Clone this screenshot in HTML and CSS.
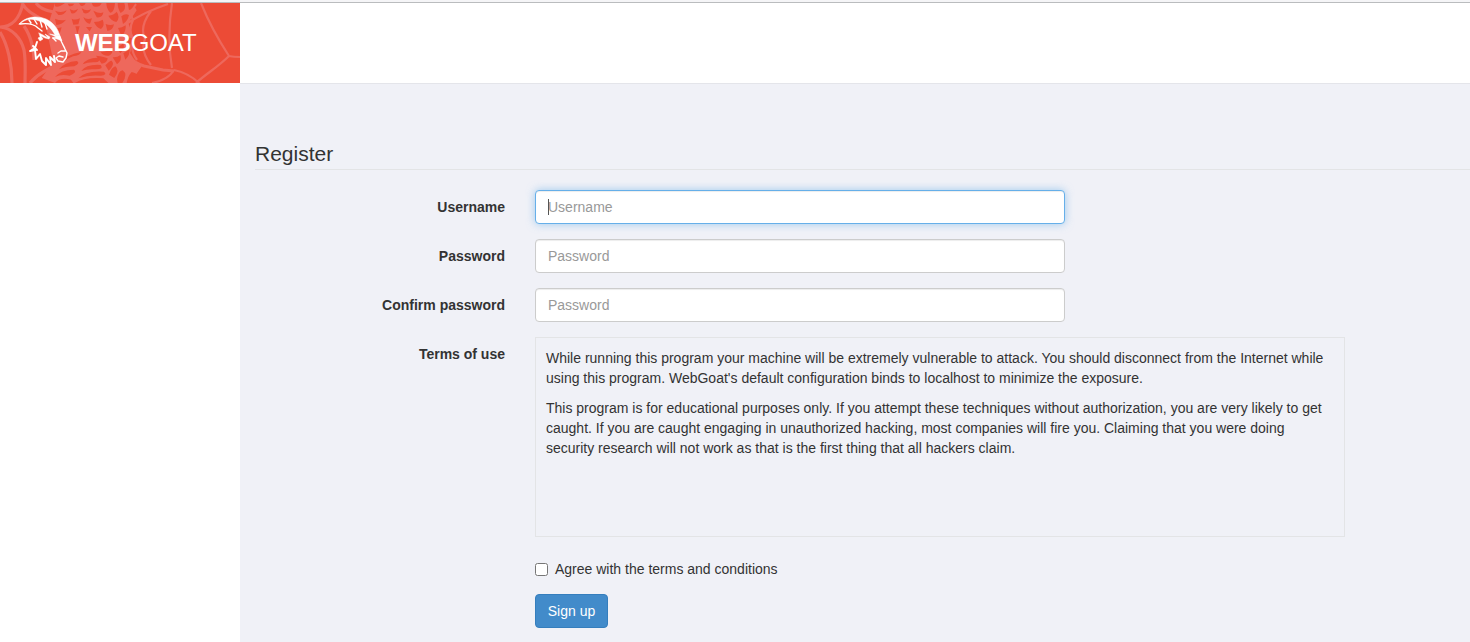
FILE: index.html
```html
<!DOCTYPE html>
<html lang="en">
<head>
<meta charset="utf-8">
<title>WebGoat</title>
<link rel="stylesheet" href="styles.css">
</head>
<body>
<div class="topline"></div>
<header class="header">
  <a class="brand">
    <svg class="brand-art" viewBox="0 3 240 80" aria-hidden="true">
      <g class="web">
        <path d="M0 27C12 27 20 18 23 3M0 27C12 28 21 38 24 50C26 62 25 73 25 83M0 32C8 45 12 65 12 83M22 3C28 14 38 16 50 24M24 26C31 36 34 50 34 60M30 83C40 71 55 66 72 58M36 3C40 9 48 11 54 12"/>
        <path d="M128 56Q134 63 144 66L163 70L174 71M140 66L128 83"/>
        <path class="thin" d="M172 3C169 23 168 45 172 68M201 3C209 23 216 36 229 56Q233 57 240 57M229 56C218 67 207 73 196 83M174 70C184 72 193 77 200 84M152 83Q168 80 174 70"/>
        <path class="thin" d="M168 4C156 8 140 15 126 24M151 11Q139 27 145 39Q140 51 151 65M136 4Q129 13 133 20Q128 30 133 40Q130 50 137 60"/>
      </g>
      <g transform="translate(55 3) scale(.33333)">
        <path class="web-fill" d="M0 0H233L245 22L220 60L238 110L225 150L245 180L258 188L245 205L230 240H0L-40 225L-5 175L-25 80Z"/>
        <g class="cells">
          <path d="M0 0H30Q12 14 0 10ZM38 2H58Q52 12 42 9ZM72 0H92Q88 12 77 8ZM110 0H140Q132 17 114 9ZM154 0H180Q178 28 166 29Q154 18 154 0ZM188 0H208Q216 20 197 30Q188 18 188 0ZM218 0H240Q232 20 222 21Z"/>
          <path d="M0 23Q20 32 35 22Q28 38 10 36ZM44 18Q58 27 69 17Q63 33 49 31ZM80 16Q96 26 108 18Q102 35 86 30ZM115 23Q134 33 145 28Q144 45 125 43ZM160 38Q177 36 185 26Q197 42 184 57Q169 54 160 38ZM199 40Q211 30 222 36Q218 55 204 63Z"/>
          <path d="M0 47Q18 55 33 50Q22 64 4 66ZM50 47Q60 53 75 46L70 64L55 65ZM85 42Q94 51 111 46L105 62Q92 62 85 42ZM117 57Q133 57 143 50Q151 67 138 78Q123 73 117 57ZM152 63Q166 69 177 64Q174 82 157 84ZM189 75Q201 75 212 67Q214 85 200 100ZM61 70L74 70L67 94ZM93 72L111 72L104 85ZM0 77L20 73L11 101Z"/>
          <path d="M137 148Q158 145 169 139Q177 151 162 158Q145 160 137 148ZM183 134Q195 131 205 121Q211 136 196 151ZM211 108Q221 102 230 105Q230 123 218 135ZM123 158Q151 161 158 166Q157 181 140 182ZM173 163Q188 164 196 156Q203 170 186 184ZM205 151L224 139Q225 158 211 170Z"/>
          <path d="M22 178Q36 153 79 147Q74 158 54 160Q39 166 22 178ZM83 184Q96 163 130 164Q139 176 120 178Q98 177 83 184ZM12 199Q30 176 65 174Q78 180 58 190Q31 190 12 199ZM79 204Q94 183 137 186Q148 199 122 199Q96 197 79 204ZM70 226Q91 202 147 206Q159 215 137 218Q101 215 70 226ZM0 222Q18 200 57 200Q68 207 44 218Q18 212 0 222ZM60 240Q88 222 145 226L160 240ZM0 240Q15 222 48 230L55 240Z"/>
          <path d="M151 187Q163 173 170 173Q181 184 161 203ZM162 215Q170 193 181 190Q196 202 178 225ZM186 229Q190 204 203 202Q220 214 202 240H188ZM215 240Q219 218 230 207Q246 210 248 220L233 240Z"/>
        </g>
      </g>
      <g class="goat">
        <path class="solid" d="M19 24C25 17 36 15 46 19C54 23 58 29 60 36L55 35C52 29 46 22 36 20C29 18 24 20 20 24Z"/>
        <path d="M20 24C27 23 34 24 38 28L42 31M29 20L31 23M34 19L37 24M40 20L42 27M45 23L47 29"/>
        <path class="solid" d="M39 33L43 35L48 38L45 34L50 37L49 39L45 38L41 36L43 39L40 41L38 38L40 37ZM50 34L60 36L62 41L57 39L52 38L56 37Z"/>
        <path d="M53 38L56 41M60 37C61 43 64 46 65 49L67 53L66 58L63 62L58 61L56 58L59 56L63 57M58 53L61 51L65 51"/>
        <path class="wool" d="M37 42L35 48L30 51L35 50L36 59L40 54L42 61L46 65L46 58L51 65L50 57L55 62L54 56M33 46L37 50"/>
      </g>
    </svg>
    <span class="brand-text"><b>WEB</b>GOAT</span>
  </a>
</header>
<div class="layout">
  <aside class="sidebar"></aside>
  <main class="content">
    <h1 class="legend">Register</h1>
    <form class="form">
      <div class="row">
        <label class="label" for="username">Username</label>
        <div class="field"><input class="input input-active" id="username" type="text" placeholder="Username"><i class="caret"></i></div>
      </div>
      <div class="row">
        <label class="label" for="password">Password</label>
        <div class="field"><input class="input" id="password" type="password" placeholder="Password"></div>
      </div>
      <div class="row">
        <label class="label" for="confirm">Confirm password</label>
        <div class="field"><input class="input" id="confirm" type="password" placeholder="Password"></div>
      </div>
      <div class="row">
        <span class="label">Terms of use</span>
        <div class="terms">
          <p>While running this program your machine will be extremely vulnerable to attack. You should disconnect from the Internet while using this program. WebGoat's default configuration binds to localhost to minimize the exposure.</p>
          <p>This program is for educational purposes only. If you attempt these techniques without authorization, you are very likely to get caught. If you are caught engaging in unauthorized hacking, most companies will fire you. Claiming that you were doing security research will not work as that is the first thing that all hackers claim.</p>
        </div>
      </div>
      <label class="agree"><input type="checkbox" class="check"><span>Agree with the terms and conditions</span></label>
      <button class="button" type="button">Sign up</button>
    </form>
  </main>
</div>
</body>
</html>
```
FILE: styles.css
```css
* { box-sizing: border-box; }
html, body { height: 100%; }
body { margin: 0; overflow: hidden; display: flex; flex-direction: column; background: #fff; color: #333; font: 14px/20px "Liberation Sans", Arial, sans-serif; }
.topline { flex: none; height: 3px; background: #f5f5f7; border-bottom: 1px solid #babcbe; }
.header { flex: none; height: 81px; background: linear-gradient(#e4e5ea, #e4e5ea) 240px 80px / 100% 1px no-repeat; }
.brand { position: relative; display: flex; align-items: center; width: 240px; height: 80px; padding-left: 75px; background: #ec4b36; color: #fff; }
.brand-art { position: absolute; left: 0; top: 0; width: 240px; height: 80px; }
.brand-text { position: relative; font-size: 24px; line-height: 26px; letter-spacing: -0.1px; }
.web { fill: none; stroke: #ee685c; stroke-width: 3.2; }
.web .thin { stroke-width: 2.2; }
.web-fill { fill: #ee685c; }
.cells { fill: #ec4b36; }
.goat { fill: none; stroke: #fff; stroke-width: 1.4; stroke-linejoin: round; stroke-linecap: round; }
.goat .solid { fill: #fff; stroke-width: .5; }
.goat .wool { stroke-width: 1.9; }
.layout { flex: 1; display: flex; min-height: 0; }
.sidebar { flex: none; width: 240px; background: #fff; }
.content { flex: 1; min-width: 0; padding: 55px 0 0 15px; background: #f0f1f7; }
.legend { margin: 0 0 20px; height: 31px; border-bottom: 1px solid #e3e4e6; font-size: 21px; line-height: 30px; font-weight: 400; }
.row { display: flex; margin-bottom: 15px; }
.label { width: 250px; margin-right: 30px; padding-top: 7px; text-align: right; font-weight: 700; }
.field { position: relative; width: 530px; height: 34px; }
.input { display: block; width: 100%; height: 34px; padding: 6px 12px; border: 1px solid #ccc; border-radius: 4px; background: #fff; color: #555; font: inherit; box-shadow: inset 0 1px 1px rgba(0,0,0,.075); outline: 0; }
.input::placeholder { color: #999; opacity: 1; }
.input-active { border-color: #66afe9; box-shadow: inset 0 1px 1px rgba(0,0,0,.075), 0 0 8px rgba(102,175,233,.6); }
.caret { position: absolute; left: 13px; top: 9px; width: 1px; height: 16px; background: #555; }
.terms { width: 810px; height: 200px; padding: 10px; border: 1px solid #e3e4e6; }
.terms p { margin: 0 0 10px; }
.agree { display: flex; align-items: center; gap: 7px; margin: 22px 0 0 280px; height: 20px; }
.check { width: 13px; height: 13px; margin: 0; }
.button { display: block; margin: 15px 0 0 280px; width: 73px; height: 34px; padding: 0; border: 1px solid #357ebd; border-radius: 4px; background: #428bca; color: #fff; font: inherit; }
```
